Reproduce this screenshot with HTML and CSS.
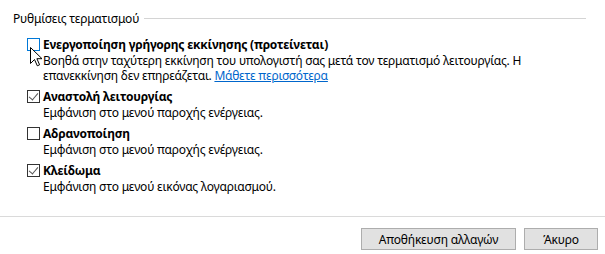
FILE: index.html
```html
<!DOCTYPE html>
<html lang="el">
<head>
  <meta charset="UTF-8">
  <meta name="viewport" content="width=device-width, initial-scale=1.0">
  <link rel="stylesheet" href="styles.css">
</head>
<body>

<div class="settings">
  <div class="group-head">Ρυθμίσεις τερματισμού</div>

  <div class="options">
    <div class="option">
      <label class="check-row">
        <span class="box hover"></span>
        Ενεργοποίηση γρήγορης εκκίνησης (προτείνεται)
      </label>
      <div class="desc">Βοηθά στην ταχύτερη εκκίνηση του υπολογιστή σας μετά τον τερματισμό λειτουργίας. Η επανεκκίνηση δεν επηρεάζεται. <a href="#" class="link">Μάθετε περισσότερα</a></div>
    </div>

    <div class="option">
      <label class="check-row">
        <span class="box checked"></span>
        Αναστολή λειτουργίας
      </label>
      <div class="desc">Εμφάνιση στο μενού παροχής ενέργειας.</div>
    </div>

    <div class="option">
      <label class="check-row">
        <span class="box"></span>
        Αδρανοποίηση
      </label>
      <div class="desc">Εμφάνιση στο μενού παροχής ενέργειας.</div>
    </div>

    <div class="option">
      <label class="check-row">
        <span class="box checked"></span>
        Κλείδωμα
      </label>
      <div class="desc">Εμφάνιση στο μενού εικόνας λογαριασμού.</div>
    </div>
  </div>
</div>

<div class="footer">
  <button class="btn btn-save">Αποθήκευση αλλαγών</button>
  <button class="btn btn-cancel">Άκυρο</button>
</div>

<!-- mouse pointer over the first checkbox -->
<svg class="cursor" width="13" height="20" viewBox="0 0 13 20">
  <path d="M0.5 0.5 L0.5 16.5 L4.5 12.5 L7.3 18.8 L9.6 17.8 L6.9 11.7 L12 11.7 Z" fill="#fff" stroke="#000" stroke-width="1" stroke-linejoin="miter"/>
</svg>

</body>
</html>
```

FILE: styles.css
```css
body {
  margin: 0;
  height: 100vh;
  display: flex;
  flex-direction: column;
  background: #fff;
  color: #000;
  font-family: "Noto Sans", "Liberation Sans", sans-serif;
  font-size: 12px;
  letter-spacing: -0.2px;
}

.settings {
  padding: 10px 19px 0 13px;
}

.group-head {
  display: flex;
  align-items: center;
  gap: 5px;
  height: 17px;
  line-height: 17px;
}

.group-head::after {
  content: '';
  flex: 1;
  border-top: 1px solid #d4d4d4;
}

.options {
  margin: 9px 0 0 14px;
}

.option {
  margin-bottom: 5px;
}

.check-row {
  display: flex;
  align-items: center;
  gap: 3px;
  height: 17px;
  line-height: 17px;
  font-weight: bold;
}

.box {
  width: 11px;
  height: 11px;
  border: 1px solid #333;
  background: #fff;
  position: relative;
}

.box.hover {
  border-color: #0078d7;
}

.box.checked::after {
  content: '';
  position: absolute;
  left: 3px;
  top: 0px;
  width: 4px;
  height: 8px;
  border-right: 1px solid #555;
  border-bottom: 1px solid #555;
  transform: rotate(40deg);
}

.desc {
  margin-left: 16px;
  line-height: 15px;
}

.link {
  color: #0066cc;
  text-decoration: underline;
}

.footer {
  margin-top: auto;
  border-top: 1px solid #dadada;
  padding: 11px 7px 4px 0;
  display: flex;
  justify-content: flex-end;
  gap: 8px;
}

.btn {
  height: 22px;
  border: 1px solid #adadad;
  background: #e1e1e1;
  font-family: inherit;
  font-size: 12px;
  letter-spacing: -0.2px;
  color: #000;
  padding: 0;
}

.btn-save {
  width: 155px;
}

.btn-cancel {
  width: 74px;
}

.cursor {
  position: absolute;
  left: 30px;
  top: 47px;
}
```
